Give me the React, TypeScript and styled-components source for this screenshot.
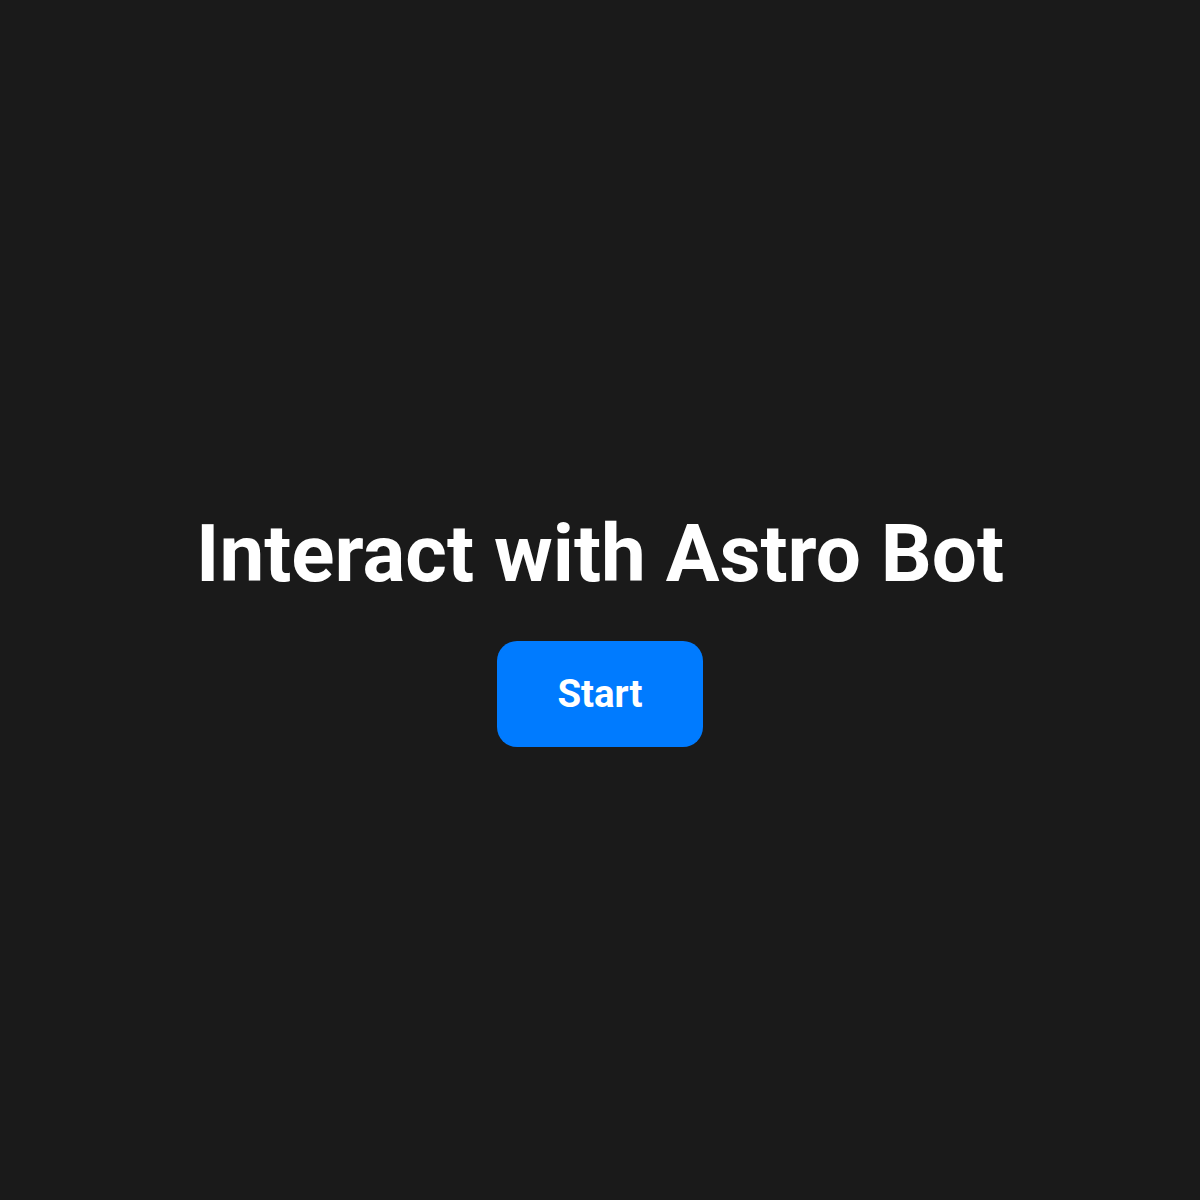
import styled, { createGlobalStyle } from 'styled-components'

const GlobalStyle = createGlobalStyle`
  html, body {
    margin: 0;
    padding: 0;
    background: #1a1a1a;
  }

  body {
    font-family: Roboto, 'Liberation Sans', Arial, sans-serif;
    color: #ffffff;
  }
`

export default function App() {
  return (
    <>
      <GlobalStyle />
      <Screen>
        <Title>Interact with Astro Bot</Title>
        <StartButton type="button">Start</StartButton>
      </Screen>
    </>
  )
}

const Screen = styled.main`
  width: 100%;
  height: 100vh;

  display: flex;
  flex-direction: column;
  align-items: center;
  justify-content: center;

  background: #1a1a1a;
`

const Title = styled.h1`
  margin: 0.67em 0 40px;

  font-size: 80px;
  font-weight: 700;
  color: #ffffff;
`

const StartButton = styled.button`
  padding: 30px 60px;

  border: none;
  border-radius: 20px;
  background: #007bff;

  font-family: inherit;
  font-size: 38.4px;
  line-height: 46px;
  font-weight: 700;
  color: #ffffff;

  cursor: pointer;
`
